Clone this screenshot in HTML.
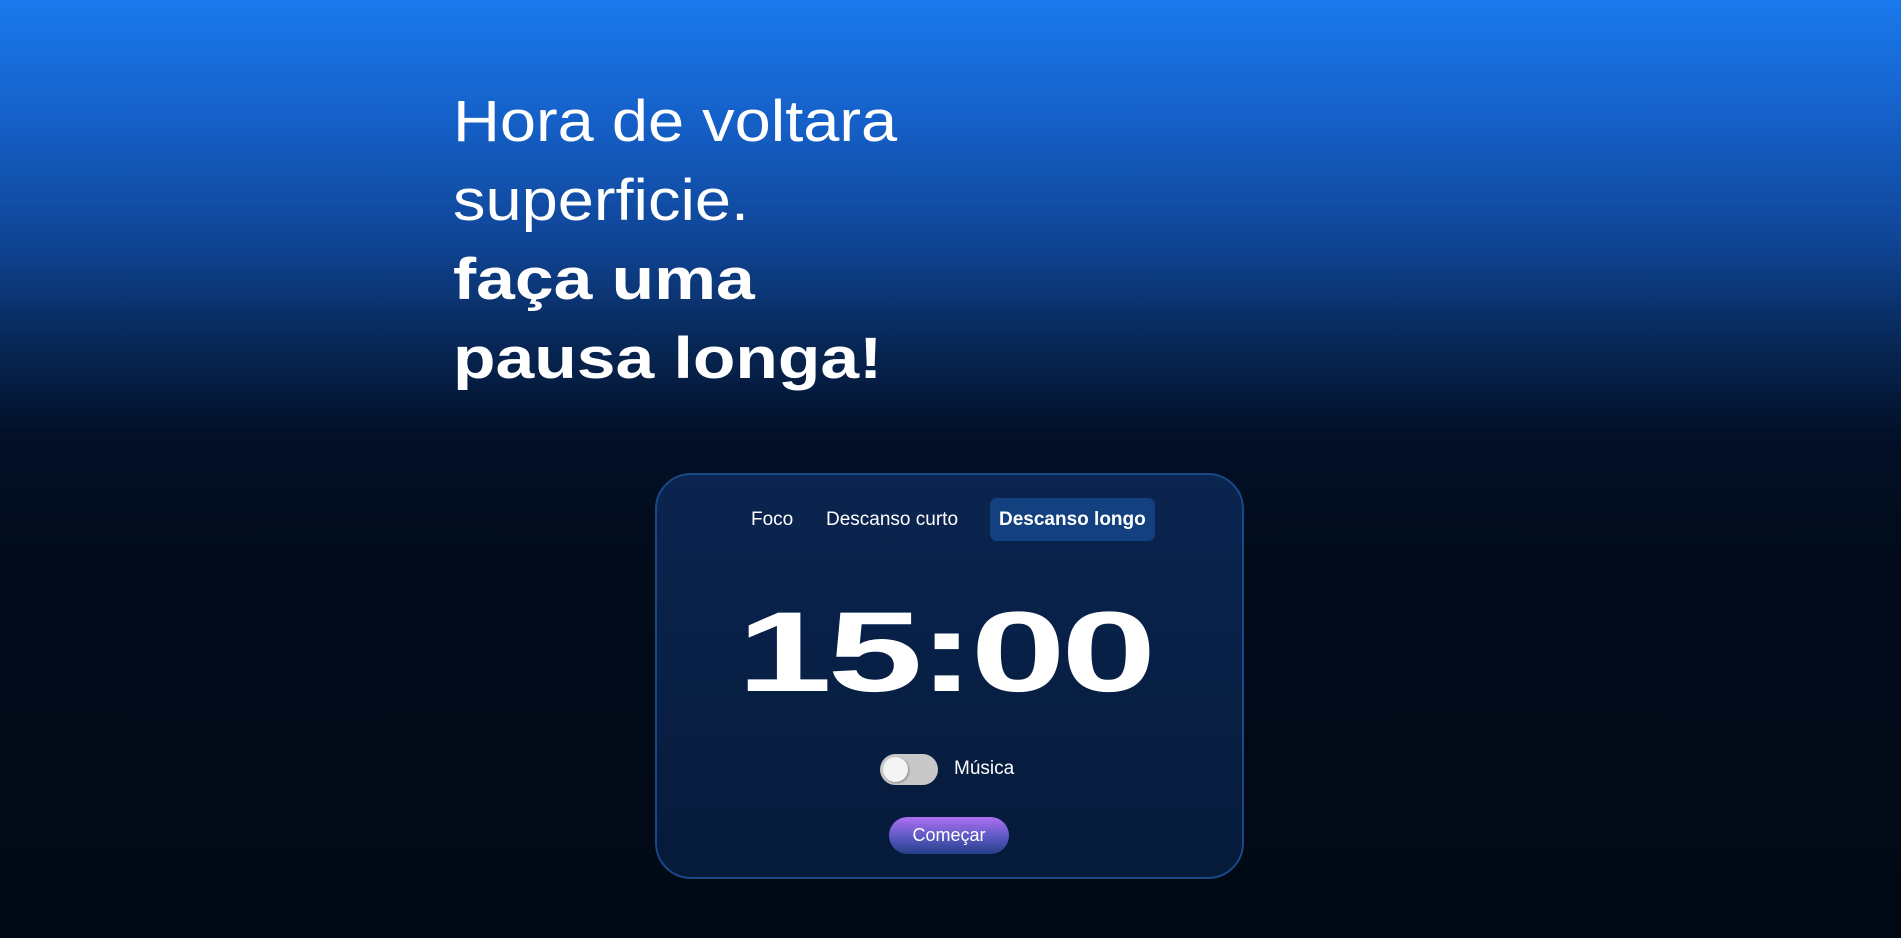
<!DOCTYPE html>
<html><head><meta charset="utf-8"><style>
*{margin:0;padding:0;box-sizing:border-box}
body{width:1901px;height:938px;overflow:hidden;font-family:"Liberation Sans",sans-serif;color:#fff;
background:linear-gradient(180deg,#1a79ec 0px,#1560c8 120px,#0f4596 240px,#082858 340px,#020f26 440px,#010b1a 560px,#010914 938px);position:relative}
.h{position:absolute;left:453px;font-size:58px;line-height:79px;transform-origin:left top;white-space:nowrap;letter-spacing:0}
.l{font-weight:300;transform:scaleX(1.12)}
.b{font-weight:700;transform:scaleX(1.2)}
.card{position:absolute;left:655px;top:473px;width:589px;height:406px;border:2px solid #1a4786;border-radius:36px;
background:linear-gradient(180deg,#0a2550,#061a3a)}
.tab{position:absolute;top:498px;height:43px;line-height:43px;font-size:19px;white-space:nowrap}
.act{background:#13407e;border-radius:7px;font-weight:700;padding:0 9px}
.t{position:absolute;left:737px;top:583px;font-size:114px;font-weight:700;line-height:140px;transform:scaleX(1.5);transform-origin:left top;letter-spacing:-3px}
.tg{position:absolute;left:880px;top:754px;width:58px;height:31px;border-radius:16px;background:#c8c8c8}
.tg i{position:absolute;left:3px;top:3px;width:25px;height:25px;border-radius:50%;background:#f4f4f4;box-shadow:1px 1px 2px #888}
.btn{position:absolute;left:889px;top:817px;width:120px;height:37px;border-radius:19px;background:linear-gradient(180deg,#b06ff2,#5a58c0 55%,#26408a);font-size:18px;text-align:center;line-height:37px}
</style></head><body>
<div class="h l" style="top:82px">Hora de voltara</div>
<div class="h l" style="top:161px">superficie.</div>
<div class="h b" style="top:240px">faça uma</div>
<div class="h b" style="top:319px">pausa longa!</div>
<div class="card"></div>
<div class="tab" style="left:751px">Foco</div>
<div class="tab" style="left:826px">Descanso curto</div>
<div class="tab act" style="left:990px;width:165px">Descanso longo</div>
<div class="t">15:00</div>
<div class="tg"><i></i></div>
<div style="position:absolute;left:954px;top:757px;font-size:19px;line-height:24px">Música</div>
<div class="btn">Começar</div>
</body></html>
